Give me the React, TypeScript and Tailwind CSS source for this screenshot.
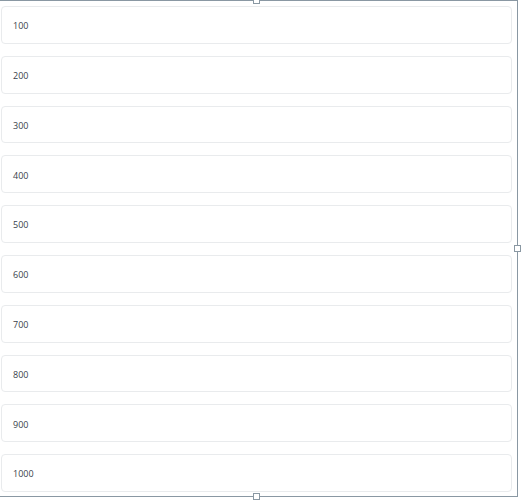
const ITEMS = [100, 200, 300, 400, 500, 600, 700, 800, 900, 1000];

function Handle({ className }: { className: string }) {
  return <div className={`absolute h-[7px] w-[7px] border border-[#8a98a3] bg-white ${className}`} />;
}

export default function App() {
  return (
    <div className="h-[500px] w-[522px] overflow-hidden bg-white font-['Open_Sans',sans-serif]">
      <div className="relative h-[497px] w-[518px] border-t border-r border-b border-[#8a98a3]">
        <div className="flex flex-col gap-[12px] pt-[5px] pl-[1px] pr-[5px]">
          {ITEMS.map((n) => (
            <div
              key={n}
              className="flex h-[37.8px] items-center rounded-[4px] border border-[#e9ebed] bg-white pt-[2px] pl-[11px] text-[9px] text-[#38414b]"
            >
              {n}
            </div>
          ))}
        </div>
        <Handle className="left-[253px] top-[-4px]" />
        <Handle className="right-[-4px] top-[244px]" />
        <Handle className="bottom-[-4px] left-[253px]" />
      </div>
    </div>
  );
}
